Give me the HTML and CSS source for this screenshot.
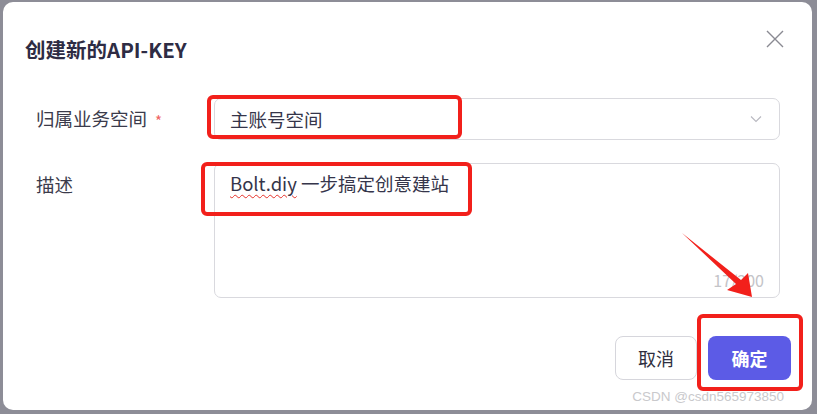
FILE: index.html
```html
<!DOCTYPE html>
<html lang="zh-CN">
<head>
<meta charset="utf-8">
<title>创建新的API-KEY</title>
<link rel="stylesheet" href="styles.css">
</head>
<body>
<div class="dialog">
  <div class="header">
    <div class="title">创建新的API-KEY</div>
    <svg class="close" width="18" height="18" viewBox="0 0 18 18"><path d="M1 1 L17 17 M17 1 L1 17" stroke="#8a8a92" stroke-width="1.4" fill="none"/></svg>
  </div>
  <div class="form">
    <div class="row">
      <div class="label">归属业务空间<span class="req">*</span></div>
      <div class="select">
        <span class="value">主账号空间</span>
        <svg class="chev" width="12" height="8" viewBox="0 0 12 8"><path d="M1 1.5 L6 6.5 L11 1.5" stroke="#b8b8c0" stroke-width="1.1" fill="none"/></svg>
      </div>
    </div>
    <div class="row row-desc">
      <div class="label label-top">描述</div>
      <div class="textarea">
        <div class="value"><span class="spell">Bolt.diy</span> 一步搞定创意建站</div>
        <div class="count">17/200</div>
      </div>
    </div>
  </div>
  <div class="footer">
    <button class="btn btn-cancel">取消</button>
    <button class="btn btn-ok">确定</button>
  </div>
  <div class="watermark">CSDN @csdn565973850</div>
</div>
<svg class="marks" width="817" height="414" viewBox="0 0 817 414">
  <rect x="209" y="97" width="251" height="40" rx="4" fill="none" stroke="#f2201b" stroke-width="4"/>
  <rect x="203" y="164" width="267" height="50" rx="4" fill="none" stroke="#f2201b" stroke-width="4"/>
  <rect x="699" y="316" width="102" height="73" rx="4" fill="none" stroke="#f2201b" stroke-width="4"/>
  <polygon points="682,233 741,280 748,273 752,297 727,290 736,284" fill="#f2201b"/>
</svg>
</body>
</html>
```
FILE: styles.css
```css
html, body {
  margin: 0;
  padding: 0;
}
body {
  width: 817px;
  height: 414px;
  overflow: hidden;
  background: #8d8d97;
  font-family: "Noto Sans CJK SC", "Noto Sans", sans-serif;
  position: relative;
}
.dialog {
  box-sizing: border-box;
  margin: 2px 5px 0 3px;
  width: 809px;
  height: 408px;
  background: #ffffff;
  border-radius: 10px;
  display: flex;
  flex-direction: column;
}
.header {
  box-sizing: border-box;
  height: 96px;
  padding: 28px 28px 0 22px;
  display: flex;
  justify-content: space-between;
  align-items: flex-start;
}
.title {
  margin-top: 6px;
  font-size: 20.5px;
  line-height: 26px;
  font-weight: 700;
  color: #2e2c44;
}
.close {
  display: block;
}
.form {
  padding: 0 32px 0 33px;
  display: flex;
  flex-direction: column;
}
.row {
  display: flex;
  align-items: center;
}
.row-desc {
  margin-top: 23px;
  align-items: flex-start;
}
.label {
  width: 178px;
  flex: none;
  font-size: 18.5px;
  line-height: 26px;
  color: #3b3b4b;
}
.label-top {
  padding-top: 8px;
}
.req {
  color: #f06464;
  font-size: 15px;
  margin-left: 8px;
  vertical-align: -1px;
}
.select {
  box-sizing: border-box;
  flex: 1;
  height: 42px;
  border: 1px solid #d9d9de;
  border-radius: 7px;
  display: flex;
  align-items: center;
  justify-content: space-between;
  padding: 0 17px 0 15px;
}
.value {
  font-size: 18.5px;
  line-height: 26px;
  color: #35354a;
}
.textarea {
  box-sizing: border-box;
  flex: 1;
  height: 135px;
  border: 1px solid #d9d9de;
  border-radius: 7px;
  padding: 6px 15px 6px 15px;
  display: flex;
  flex-direction: column;
  justify-content: space-between;
}
.spell {
  text-decoration: underline wavy #e5312a;
  text-decoration-thickness: 1px;
  text-underline-offset: 3px;
}
.count {
  align-self: flex-end;
  font-size: 16px;
  line-height: 22px;
  color: #c4c4c8;
}
.footer {
  margin-top: 38px;
  padding-right: 21px;
  display: flex;
  justify-content: flex-end;
  gap: 11px;
}
.btn {
  box-sizing: border-box;
  height: 44px;
  border-radius: 8px;
  font-family: "Noto Sans CJK SC", sans-serif;
  font-size: 18px;
  cursor: pointer;
}
.btn-cancel {
  width: 82px;
  background: #ffffff;
  border: 1px solid #d6d6dc;
  color: #2f2f40;
}
.btn-ok {
  width: 83px;
  background: #5c5be6;
  border: none;
  color: #ffffff;
  font-weight: 700;
}
.watermark {
  margin-top: 9px;
  padding-right: 28px;
  text-align: right;
  font-family: "Liberation Sans", sans-serif;
  font-size: 13.5px;
  line-height: 16px;
  color: #c9c9cc;
}
.marks {
  position: absolute;
  left: 0;
  top: 0;
  pointer-events: none;
}
```
